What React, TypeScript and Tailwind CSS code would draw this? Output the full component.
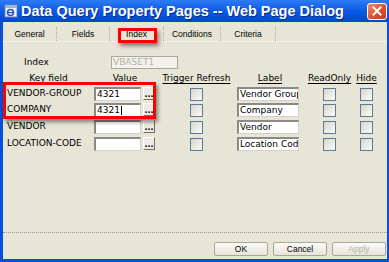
import React from "react";

const F = { fontFamily: '"DejaVu Sans", Verdana, sans-serif' };
const T = { fontFamily: '"Liberation Sans", Arial, sans-serif' };

function Check() {
  return (
    <div className="w-[13px] h-[13px] border border-[#5d7b98] bg-gradient-to-br from-[#d6d5cc] to-[#fbfbf8]" />
  );
}

function DotBtn() {
  return (
    <div className="w-[12px] h-[13px] bg-[#ecebe3] border border-t-white border-l-white border-b-[#716f64] border-r-[#716f64] flex items-end justify-center text-[8px] leading-[9px] text-black font-bold">
      ...
    </div>
  );
}

function TextBox({ w, children, caret }: { w: string; children?: React.ReactNode; caret?: boolean }) {
  return (
    <div
      className={`${w} h-[14px] bg-white border-t-2 border-l-2 border-t-[#8a8a84] border-l-[#8a8a84] border-b border-r border-b-[#d4d0c8] border-r-[#d4d0c8] overflow-hidden whitespace-nowrap text-[9px] leading-[11px] pl-[1px] text-black flex items-center`}
    >
      {children}
      {caret && <span className="inline-block w-[1px] h-[9px] bg-black ml-[1px]" />}
    </div>
  );
}

const rows = [
  { key: "VENDOR-GROUP", value: "4321", label: "Vendor Group", h: "h-[16px]" },
  { key: "COMPANY", value: "4321", label: "Company", h: "h-[17px]", caret: true },
  { key: "VENDOR", value: "", label: "Vendor", h: "h-[17px]" },
  { key: "LOCATION-CODE", value: "", label: "Location Code", h: "h-[17px]" },
];

const tabs = [
  { name: "General", w: "w-[54px]" },
  { name: "Fields", w: "w-[53px]" },
  { name: "Index", w: "w-[54px]" },
  { name: "Conditions", w: "w-[57px]" },
  { name: "Criteria", w: "w-[55px]" },
];

export default function App() {
  return (
    <div className="w-[389px] h-[262px] flex flex-col bg-[#0a4fd8] overflow-hidden" style={F}>
      {/* Title bar */}
      <div className="h-[22px] flex items-center bg-gradient-to-b from-[#2d7bf4] via-[#0a5ae6] to-[#0348d0] px-[3px] shrink-0">
        <svg width="14" height="14" viewBox="0 0 14 14" className="ml-[1px] shrink-0">
          <rect x="1" y="1" width="12" height="12" fill="#f4f6fb" stroke="#6d83a8" />
          <rect x="1" y="1" width="12" height="3" fill="#9cb3dc" />
          <circle cx="6.5" cy="8.5" r="3" fill="none" stroke="#2456c8" strokeWidth="1.6" />
          <line x1="3.5" y1="8.5" x2="9.5" y2="8.5" stroke="#2456c8" strokeWidth="1.2" />
        </svg>
        <span
          className="ml-[3px] text-white font-bold text-[14.5px] leading-[16px] whitespace-nowrap [text-shadow:1px_1px_0_#0a2a88]"
          style={T}
        >
          Data Query Property Pages -- Web Page Dialog
        </span>
        <div className="ml-auto mr-[-1px] w-[20px] h-[17px] rounded-[3px] border border-white bg-gradient-to-br from-[#f08a6a] via-[#e0562e] to-[#c23c14] flex items-center justify-center">
          <svg width="10" height="10" viewBox="0 0 10 10">
            <path d="M1.5 1.5 L8.5 8.5 M8.5 1.5 L1.5 8.5" stroke="white" strokeWidth="2" strokeLinecap="square" />
          </svg>
        </div>
      </div>

      {/* Body */}
      <div className="flex-1 flex ml-[3px] mr-[2px] mb-[3px] bg-[#e7e6d6] relative">
        <div className="flex-1 flex flex-col">
          {/* Tabs */}
          <div className="mt-[5px] h-[14px] flex text-[8.5px] text-black" style={T}>
            {tabs.map((t) => (
              <div
                key={t.name}
                className={`${t.w} h-full flex items-center justify-center border-r border-dotted border-r-[#b0aea0]`}
              >
                {t.name}
              </div>
            ))}
          </div>
          <div className="h-[1px] border-t border-dotted border-t-[#fbfbf5]" />

          {/* Index row */}
          <div className="mt-[14px] h-[13px] flex items-center text-[9px] text-black">
            <div className="w-[108px] pl-[21px]">Index</div>
            <div className="w-[67px] h-[13px] border border-[#a9a89c] bg-[#f3f2ea] text-[#b2b1a8] text-[9px] leading-[11px] pl-[1px]">
              VBASET1
            </div>
          </div>

          {/* Header row */}
          <div className="mt-[3px] h-[14px] flex items-center text-[9px] text-black">
            <div className="w-[91px] text-center underline underline-offset-[2px]">Key field</div>
            <div className="w-[62px] text-center underline underline-offset-[2px]">Value</div>
            <div className="w-[81px] text-center underline underline-offset-[2px] whitespace-nowrap">Trigger Refresh</div>
            <div className="w-[66px] text-center underline underline-offset-[2px]">Label</div>
            <div className="w-[53px] text-center underline underline-offset-[2px]">ReadOnly</div>
            <div className="w-[21px] text-center underline underline-offset-[2px]">Hide</div>
          </div>

          {/* Rows */}
          <div className="mt-[1px] flex flex-col">
            {rows.map((r) => (
              <div key={r.key} className={`${r.h} flex items-start text-[9px] text-black`}>
                <div className="w-[91px] h-[14px] flex items-center pl-[4px] whitespace-nowrap">{r.key}</div>
                <div className="w-[62px] flex items-start">
                  <TextBox w="w-[47px]" caret={r.caret}>
                    {r.value}
                  </TextBox>
                  <div className="ml-[2px]">
                    <DotBtn />
                  </div>
                </div>
                <div className="w-[81px] h-[14px] flex items-center justify-center">
                  <Check />
                </div>
                <div className="w-[66px]">
                  <TextBox w="w-[62px]">{r.label}</TextBox>
                </div>
                <div className="w-[53px] h-[14px] flex items-center justify-center">
                  <Check />
                </div>
                <div className="w-[21px] h-[14px] flex items-center justify-center">
                  <Check />
                </div>
              </div>
            ))}
          </div>

          <div className="flex-1" />
          <div className="h-[1px] border-t border-dotted border-t-[#9c9b90]" />

          {/* Buttons */}
          <div className="mt-[9px] mb-[3px] h-[14px] flex justify-end pr-[1px] gap-[5px] text-[8.5px]" style={T}>
            {["OK", "Cancel", "Apply"].map((b) => (
              <div
                key={b}
                className={`w-[54px] h-[14px] flex items-center justify-center bg-gradient-to-b from-[#fbfbf8] to-[#e6e4da] border border-[#a9a79a] rounded-[2px] ${
                  b === "Apply" ? "text-[#b6b4a6]" : "text-black"
                }`}
              >
                {b}
              </div>
            ))}
          </div>
        </div>

        {/* Annotations */}
        <div className="absolute left-[115px] top-[6px] w-[39px] h-[15px] border-[3px] border-[#ff0000] shadow-[2px_3px_4px_rgba(0,0,0,0.45)]" />
        <div className="absolute left-[0px] top-[60px] w-[153px] h-[37px] border-[3px] border-[#ff0000] shadow-[2px_3px_4px_rgba(0,0,0,0.45)]" />
      </div>
    </div>
  );
}
